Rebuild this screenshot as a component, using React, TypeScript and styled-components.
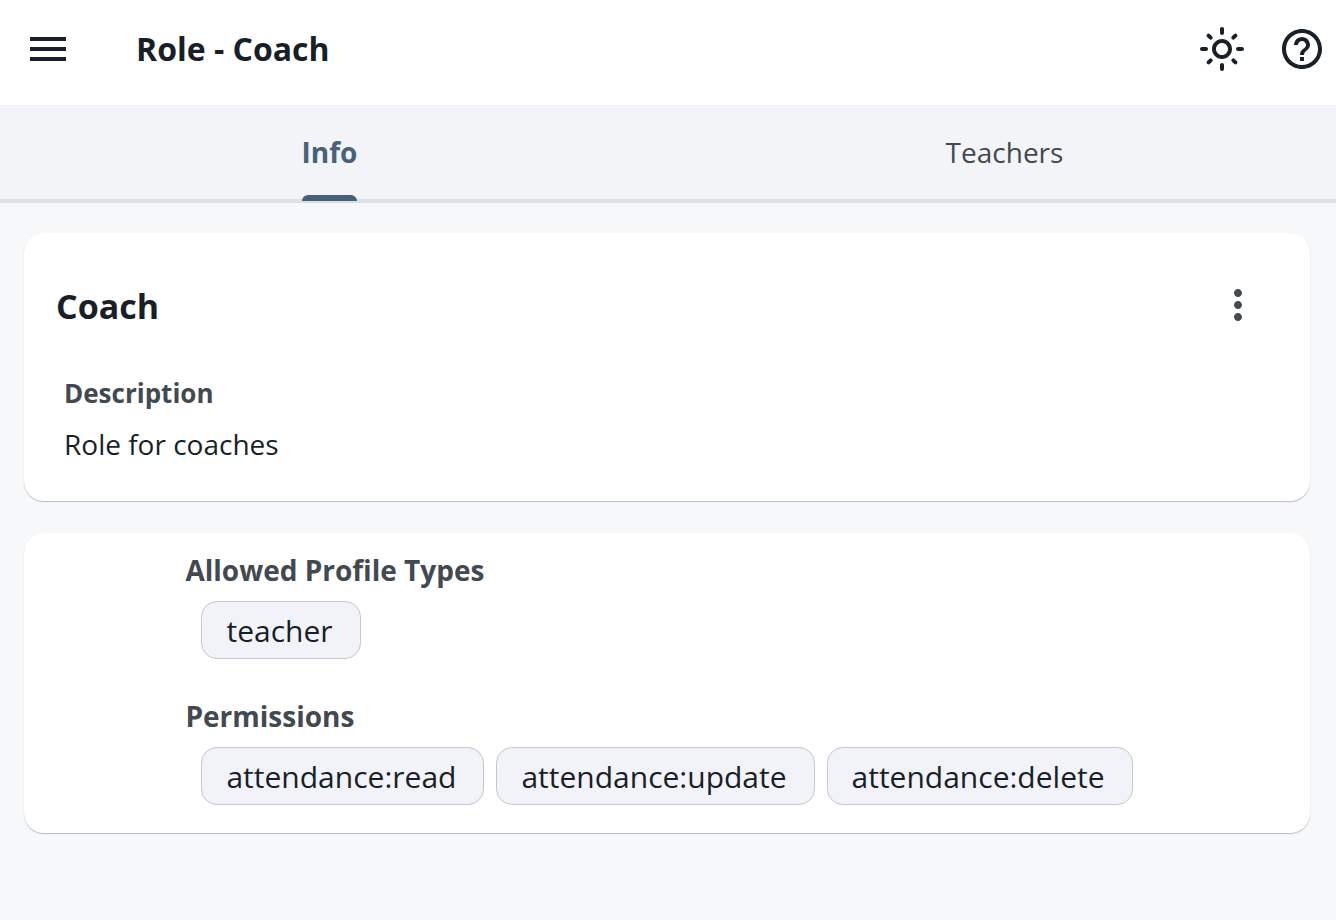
import React from "react";
import styled, { createGlobalStyle } from "styled-components";
import { MdHelpOutline, MdMenu, MdMoreVert, MdOutlineLightMode } from "react-icons/md";

const GlobalStyle = createGlobalStyle`
  * {
    box-sizing: border-box;
  }

  body {
    margin: 0;
    background: #f7f8fa;
    color: #181f27;
    font-family: "Open Sans", sans-serif;
  }
`;

const Page = styled.div`
  display: flex;
  flex-direction: column;
  min-height: 100vh;
  overflow-x: hidden;
`;

const AppBar = styled.header`
  display: flex;
  align-items: center;
  height: 105px;
  padding: 0 10px 8px 24px;
  background: #ffffff;
`;

const PageTitle = styled.h1`
  flex: 1;
  margin: 0 0 0 64px;
  font-size: 32px;
  line-height: 44px;
  font-weight: 700;
`;

const Actions = styled.div`
  display: flex;
  gap: 32px;
`;

const IconButton = styled.button<{ $muted?: boolean }>`
  display: flex;
  padding: 0;
  border: 0;
  background: none;
  color: ${({ $muted }) => ($muted ? "#42494f" : "#18212a")};
  cursor: pointer;
`;

const TabBar = styled.nav`
  border-bottom: 4px solid #dcdfe3;
  background: #f3f4f8;
`;

const TabList = styled.div`
  display: flex;
  margin: 0 -6px 0 -8px;
`;

const Tab = styled.button<{ $active?: boolean }>`
  display: flex;
  flex: 1 1 0;
  justify-content: center;
  height: 94px;
  padding: 0;
  border: 0;
  background: none;
  color: ${({ $active }) => ($active ? "#476178" : "#42494f")};
  font-family: inherit;
  font-size: 28px;
  line-height: 38px;
  font-weight: ${({ $active }) => ($active ? 700 : 400)};
  cursor: pointer;
`;

const TabLabel = styled.span<{ $active?: boolean }>`
  position: relative;
  padding-top: 28px;

  &::after {
    content: "";
    display: ${({ $active }) => ($active ? "block" : "none")};
    position: absolute;
    right: 0;
    bottom: -2px;
    left: 0;
    height: 6px;
    border-radius: 6px 6px 0 0;
    background: #476178;
  }
`;

const Content = styled.main`
  display: flex;
  flex-direction: column;
  gap: 32px;
  padding: 30px 26px 32px 24px;
`;

const Card = styled.section`
  border-radius: 20px;
  background: #ffffff;
  box-shadow: 0 1px 1px rgba(24, 31, 39, 0.28);
`;

const RoleCard = styled(Card)`
  padding: 48px 48px 37px 32px;
`;

const CardHeader = styled.div`
  display: flex;
  align-items: flex-start;
  justify-content: space-between;
`;

const CardTitle = styled.h2`
  margin: 0;
  font-size: 34px;
  line-height: 50px;
  font-weight: 700;
`;

const Details = styled.dl`
  margin: 42px 0 0;
  padding-left: 8px;
`;

const Term = styled.dt`
  color: #42494f;
  font-size: 26px;
  line-height: 40px;
  font-weight: 700;
`;

const Value = styled.dd`
  margin: 11px 0 0;
  font-size: 28px;
  line-height: 40px;
`;

const AccessCard = styled(Card)`
  display: flex;
  justify-content: center;
  padding: 16px 24px 28px;
`;

const Groups = styled.div`
  display: flex;
  flex-direction: column;
  gap: 36px;
`;

const GroupTitle = styled.h3`
  margin: 0;
  color: #42494f;
  font-size: 28px;
  line-height: 42px;
  font-weight: 700;
`;

const ChipList = styled.ul`
  display: flex;
  flex-wrap: wrap;
  gap: 12px;
  margin: 10px 0 0;
  padding: 0 16px;
  list-style: none;
`;

const Chip = styled.li`
  padding: 7px 27px 5px 24px;
  border: 1px solid #c4c7cd;
  border-radius: 16px;
  background: #f2f3f9;
  font-size: 30px;
  line-height: 44px;
`;

const groups = [
  { title: "Allowed Profile Types", items: ["teacher"] },
  {
    title: "Permissions",
    items: ["attendance:read", "attendance:update", "attendance:delete"],
  },
];

const tabs = ["Info", "Teachers"];

export default function App() {
  const [active, setActive] = React.useState("Info");

  return (
    <Page>
      <GlobalStyle />
      <AppBar>
        <IconButton type="button" aria-label="Open menu">
          <MdMenu size={48} />
        </IconButton>
        <PageTitle>Role - Coach</PageTitle>
        <Actions>
          <IconButton type="button" aria-label="Switch theme">
            <MdOutlineLightMode size={48} />
          </IconButton>
          <IconButton type="button" aria-label="Help">
            <MdHelpOutline size={48} />
          </IconButton>
        </Actions>
      </AppBar>
      <TabBar>
        <TabList role="tablist">
          {tabs.map((tab) => (
            <Tab
              key={tab}
              type="button"
              role="tab"
              aria-selected={tab === active}
              $active={tab === active}
              onClick={() => setActive(tab)}
            >
              <TabLabel $active={tab === active}>{tab}</TabLabel>
            </Tab>
          ))}
        </TabList>
      </TabBar>
      <Content>
        <RoleCard>
          <CardHeader>
            <CardTitle>Coach</CardTitle>
            <IconButton type="button" aria-label="More options" $muted>
              <MdMoreVert size={48} />
            </IconButton>
          </CardHeader>
          <Details>
            <Term>Description</Term>
            <Value>Role for coaches</Value>
          </Details>
        </RoleCard>
        <AccessCard>
          <Groups>
            {groups.map((group) => (
              <div key={group.title}>
                <GroupTitle>{group.title}</GroupTitle>
                <ChipList>
                  {group.items.map((item) => (
                    <Chip key={item}>{item}</Chip>
                  ))}
                </ChipList>
              </div>
            ))}
          </Groups>
        </AccessCard>
      </Content>
    </Page>
  );
}
